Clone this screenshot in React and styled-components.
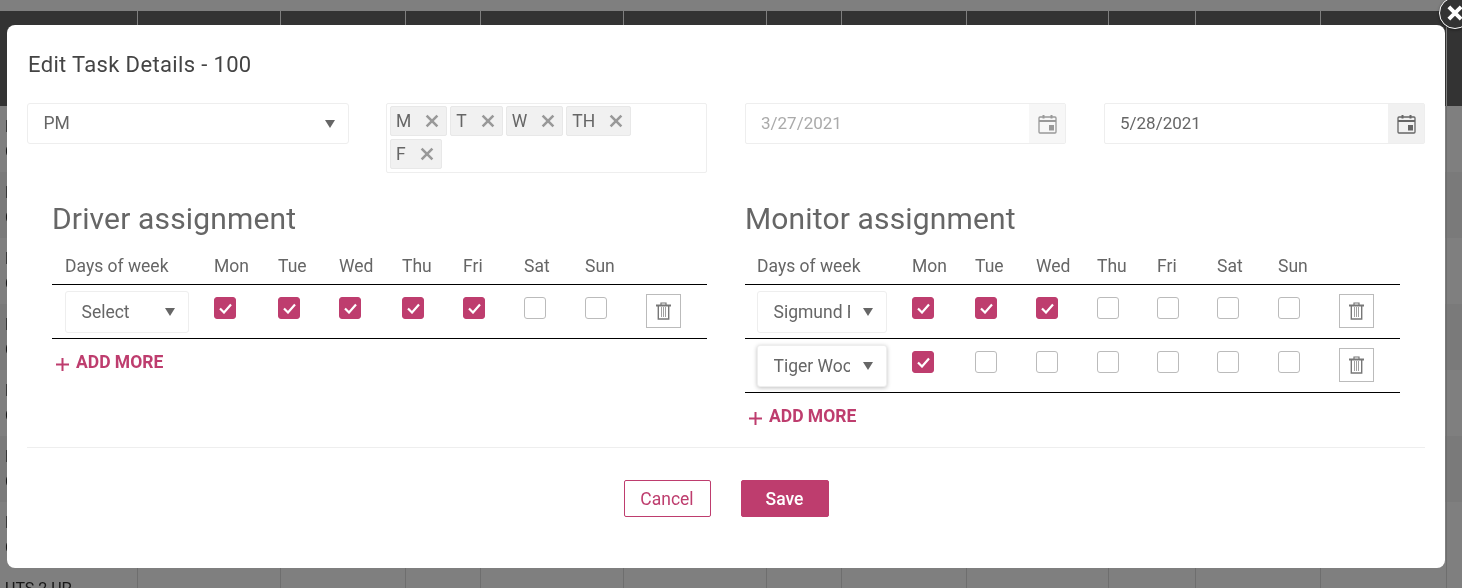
import React from "react";
import styled, { createGlobalStyle, css } from "styled-components";

const PINK = "#be3d6e";

const GlobalStyle = createGlobalStyle`
  * { box-sizing: border-box; }
  html, body {
    margin: 0;
    height: 588px;
    overflow: hidden;
    background: #fff;
    font-family: Roboto, "Liberation Sans", sans-serif;
    color: #666;
  }
`;

const columns = "138px 143px 125px 75px 143px 143px 75px 125px 142px 87px 125px 126px 1fr";
const cellCount = 13;

const Page = styled.div`
  position: relative;
  width: 1462px;
  height: 588px;
  overflow: hidden;
`;

const TopStrip = styled.div`
  height: 11px;
  background: #fff;
`;

const GridRow = styled.div`
  display: grid;
  grid-template-columns: ${columns};
  height: ${(p) => (p.$head ? 95 : 66)}px;
  background: ${(p) => (p.$head ? "#666" : p.$shade ? "#f4f4f4" : "#fff")};
`;

const Cell = styled.div`
  border-right: 1px solid ${(p) => (p.$head ? "#fff" : "#ddd")};
  padding: 8px 0 0 5px;
  font-size: 16px;
  line-height: 25px;
  color: #333;
  will-change: transform;
  &:last-child { border-right: 0; }
`;

const Overlay = styled.div`
  position: absolute;
  inset: 0;
  background: rgba(0, 0, 0, 0.5);
`;

const Modal = styled.div`
  position: absolute;
  left: 7px;
  top: 25px;
  width: 1438px;
  height: 543px;
  padding: 0 20px;
  background: #fff;
  border-radius: 8px;
  will-change: transform;
`;

const CloseButton = styled.button`
  position: absolute;
  right: -26px;
  top: -28px;
  width: 32px;
  height: 32px;
  padding: 0;
  display: flex;
  align-items: center;
  justify-content: center;
  border: 1px solid #fff;
  border-radius: 50%;
  background: #333;
  box-shadow: 0 1px 3px rgba(0, 0, 0, 0.4);
`;

const Title = styled.h2`
  margin: 0;
  padding: 27px 1px 0;
  height: 78px;
  font-size: 22px;
  letter-spacing: 0.35px;
  line-height: 26px;
  font-weight: 400;
  color: #444;
`;

const FieldRow = styled.div`
  display: grid;
  grid-template-columns: 359px 359px 359px 321px;
  align-items: start;
`;

const SelectBox = styled.div`
  position: relative;
  display: flex;
  align-items: center;
  height: ${(p) => p.$height || 42}px;
  width: ${(p) => p.$width}px;
  padding-left: 15.5px;
  border: 1px solid #eee;
  border-radius: 3px;
  background: #fff;
  font-size: 17.5px;
  color: #666;
  ${(p) => p.$focused && css`box-shadow: 0 1px 4px rgba(0, 0, 0, 0.25);`}
`;

const SelectLabel = styled.span`
  display: block;
  width: ${(p) => (p.$clip ? "76.5px" : "auto")};
  margin-top: -1px;
  overflow: hidden;
  white-space: nowrap;
`;

const Caret = styled.i`
  position: absolute;
  right: 13.5px;
  top: 50%;
  margin-top: -4px;
  width: 0;
  height: 0;
  border-top: 8px solid #666;
  border-left: 5px solid transparent;
  border-right: 5px solid transparent;
`;

const TagBox = styled.div`
  display: flex;
  flex-wrap: wrap;
  align-content: flex-start;
  gap: 3px;
  width: 321px;
  height: 70px;
  padding: 2px 60px 2px 3px;
  border: 1px solid #eee;
  border-radius: 2px;
`;

const Tag = styled.span`
  display: flex;
  align-items: center;
  gap: 14px;
  height: 30px;
  padding: 0 7px 0 5px;
  background: #f1f1f1;
  border: 1px solid #e8e8e8;
  border-radius: 2px;
  font-size: 17.5px;
  color: #666;
`;

const DateField = styled.div`
  display: flex;
  width: 321px;
  height: 41px;
  border: 1px solid #eee;
  border-radius: 2px;
  font-size: 17px;
  color: ${(p) => (p.$disabled ? "#aaa" : "#666")};
`;

const DateText = styled.div`
  flex: 1;
  padding-left: 15px;
  line-height: 39px;
`;

const DateAddon = styled.div`
  width: 36px;
  display: flex;
  align-items: center;
  justify-content: center;
  background: ${(p) => (p.$disabled ? "#f7f7f7" : "#f1f1f1")};
  color: ${(p) => (p.$disabled ? "#999" : "#666")};
`;

const Assignments = styled.div`
  display: grid;
  grid-template-columns: 655px 655px;
  column-gap: 38px;
  align-items: start;
  height: 275px;
  padding: 28px 0 0 25px;
  border-bottom: 1px solid #eee;
`;

const Heading = styled.h3`
  margin: 0;
  height: 47px;
  font-size: 30px;
  letter-spacing: 0.15px;
  line-height: 36px;
  font-weight: 400;
  color: #666;
`;

const TableRow = styled.div`
  display: grid;
  grid-template-columns: ${(p) => p.$columns};
  align-items: ${(p) => (p.$head ? "center" : "start")};
  height: ${(p) => (p.$head ? 37 : 54)}px;
  padding-left: ${(p) => p.$inset}px;
  padding-top: ${(p) => (p.$head ? 0 : 6)}px;
  border-bottom: 1px solid #000;
  font-size: 17.5px;
  color: #666;
`;

const Check = styled.span`
  display: flex;
  align-items: center;
  justify-content: center;
  width: 22px;
  height: 22px;
  margin-top: 6px;
  border-radius: 3px;
  border: 1px solid ${(p) => (p.$on ? PINK : "#bbb")};
  background: ${(p) => (p.$on ? PINK : "#fff")};
`;

const TrashButton = styled.span`
  display: flex;
  align-items: center;
  justify-content: center;
  width: 35px;
  height: 34px;
  margin-top: 3px;
  border: 1px solid #bbb;
  color: #777;
`;

const AddMore = styled.div`
  display: flex;
  align-items: center;
  gap: 7px;
  height: 45px;
  padding-left: 4px;
  font-size: 17.5px;
  font-weight: 700;
  color: ${PINK};
`;

const Footer = styled.div`
  display: flex;
  justify-content: center;
  gap: 30px;
  padding-top: 32px;
`;

const Button = styled.button`
  width: ${(p) => (p.$primary ? 88 : 87)}px;
  height: 37px;
  border: 1px solid ${PINK};
  border-radius: 2px;
  background: ${(p) => (p.$primary ? PINK : "#fff")};
  color: ${(p) => (p.$primary ? "#fff" : PINK)};
  font-family: inherit;
  font-size: 17.5px;
  font-weight: ${(p) => (p.$primary ? 500 : 400)};
`;

function CrossIcon({ size = 14, weight = 2.4, color = "#999" }) {
  return (
    <svg width={size} height={size} viewBox="0 0 13 13">
      <path d="M1.5 1.5l10 10M11.5 1.5l-10 10" stroke={color} strokeWidth={weight} fill="none" />
    </svg>
  );
}

function CalendarIcon() {
  return (
    <svg width="19" height="20" viewBox="0 0 19 20" fill="none" stroke="currentColor">
      <rect x="1" y="3" width="17" height="16" rx="1" strokeWidth="1.3" />
      <path d="M1 7h17" strokeWidth="2" />
      <path d="M5.5 1v3.5M13.5 1v3.5" strokeWidth="2" />
      <rect x="11" y="11" width="5" height="5.5" fill="currentColor" stroke="none" />
    </svg>
  );
}

function TrashIcon() {
  return (
    <svg width="15" height="18" viewBox="0 0 15 18" fill="none" stroke="currentColor">
      <path d="M0 3.5h15" strokeWidth="2" />
      <path d="M5 3V1h5v2" strokeWidth="1.2" />
      <path d="M2.3 4v13h10.4V4" strokeWidth="1.4" />
      <path d="M5.5 5v10M7.5 5v10M9.5 5v10" strokeWidth="1" opacity="0.7" />
    </svg>
  );
}

function CheckIcon() {
  return (
    <svg width="13" height="11" viewBox="0 0 13 11" fill="none">
      <path d="M1 5.5l4 4 7-8" stroke="#fff" strokeWidth="2.2" />
    </svg>
  );
}

function PlusIcon() {
  return (
    <svg width="13" height="13" viewBox="0 0 13 13" style={{ marginTop: 5 }}>
      <path d="M6.5 0v13M0 6.5h13" stroke={PINK} strokeWidth="2" />
    </svg>
  );
}

const dayNames = ["Mon", "Tue", "Wed", "Thu", "Fri", "Sat", "Sun"];

function AssignmentTable({ title, columns, inset, selectWidth, rows }) {
  return (
    <div>
      <Heading>{title}</Heading>
      <TableRow $head $columns={columns} $inset={inset}>
        <span>Days of week</span>
        {dayNames.map((d) => (
          <span key={d}>{d}</span>
        ))}
      </TableRow>
      {rows.map((row) => (
        <TableRow key={row.name} $columns={columns} $inset={inset}>
          <SelectBox $width={selectWidth} $focused={row.focused}>
            <SelectLabel $clip={row.clip}>{row.name}</SelectLabel>
            <Caret />
          </SelectBox>
          {dayNames.map((d, i) => (
            <Check key={d} $on={i < row.checked}>
              {i < row.checked && <CheckIcon />}
            </Check>
          ))}
          <TrashButton>
            <TrashIcon />
          </TrashButton>
        </TableRow>
      ))}
      <AddMore>
        <PlusIcon />
        ADD MORE
      </AddMore>
    </div>
  );
}

const backgroundRows = [0, 1, 2, 3, 4, 5, 6];

export default function App() {
  return (
    <Page>
      <GlobalStyle />
      <TopStrip />
      <GridRow $head>
        {Array.from({ length: cellCount }, (_, i) => (
          <Cell key={i} $head />
        ))}
      </GridRow>
      {backgroundRows.map((r) => (
        <GridRow key={r} $shade={r % 2 === 1}>
          {Array.from({ length: cellCount }, (_, i) => (
            <Cell key={i}>
              {i === 0 && (
                <>
                  H
                  <br />C
                </>
              )}
            </Cell>
          ))}
        </GridRow>
      ))}
      <GridRow>
        {Array.from({ length: cellCount }, (_, i) => (
          <Cell key={i}>{i === 0 && "UTS 2 UP"}</Cell>
        ))}
      </GridRow>

      <Overlay>
        <Modal>
          <CloseButton>
            <CrossIcon size={16} weight={3.2} color="#fff" />
          </CloseButton>
          <Title>Edit Task Details - 100</Title>
          <FieldRow>
            <SelectBox $height={41} $width={322}>
              <SelectLabel>PM</SelectLabel>
              <Caret />
            </SelectBox>
            <TagBox>
              {["M", "T", "W", "TH", "F"].map((t) => (
                <Tag key={t}>
                  {t}
                  <CrossIcon />
                </Tag>
              ))}
            </TagBox>
            <DateField $disabled>
              <DateText>3/27/2021</DateText>
              <DateAddon $disabled>
                <CalendarIcon />
              </DateAddon>
            </DateField>
            <DateField>
              <DateText>5/28/2021</DateText>
              <DateAddon>
                <CalendarIcon />
              </DateAddon>
            </DateField>
          </FieldRow>
          <Assignments>
            <AssignmentTable
              title="Driver assignment"
              columns="149px 64px 61px 63px 61px 61px 61px 61px 35px"
              inset={13}
              selectWidth={124}
              rows={[{ name: "Select", checked: 5 }]}
            />
            <AssignmentTable
              title="Monitor assignment"
              columns="155px 63px 61px 61px 60px 60px 61px 61px 35px"
              inset={12}
              selectWidth={130}
              rows={[
                { name: "Sigmund Freud", checked: 3, clip: true },
                { name: "Tiger Woods", checked: 1, clip: true, focused: true },
              ]}
            />
          </Assignments>
          <Footer>
            <Button>Cancel</Button>
            <Button $primary>Save</Button>
          </Footer>
        </Modal>
      </Overlay>
    </Page>
  );
}
